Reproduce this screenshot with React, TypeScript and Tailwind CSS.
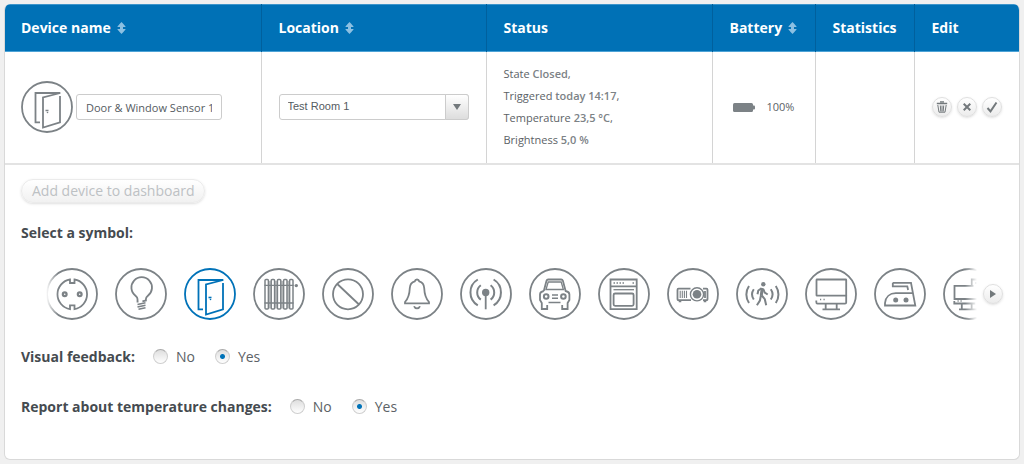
import { useState, type ReactNode } from "react";
import { clsx } from "clsx";

/**
 * Table columns. The status column has no width and takes what is left.
 */
const columns = [
  { name: "Device name", width: "w-[256px]", sortable: true },
  { name: "Location", width: "w-[225px]", sortable: true },
  { name: "Status", width: "", sortable: false },
  { name: "Battery", width: "w-[103px]", sortable: true },
  { name: "Statistics", width: "w-[99px]", sortable: false },
  { name: "Edit", width: "w-[105px]", sortable: false },
];

const readings = [
  { label: "State", value: "Closed" },
  { label: "Triggered", value: "today 14:17" },
  { label: "Temperature", value: "23,5 °C" },
  { label: "Brightness", value: "5,0 %" },
];

// Line drawings on a 52x52 canvas, placed inside the symbol ring
const doorDrawing = (
  <>
    <path d="M19 41.3h-4.5V12h24.8L22 16.5v30l17-5.2V15" />
    <path d="M24.5 29.5h3" strokeWidth="1.6" />
    <circle cx="26.500" cy="31.500" r=".8" fill="currentColor" stroke="none" />
  </>
);

const symbols: { id: string; drawing: ReactNode }[] = [
  {
    id: "Socket",
    drawing: (
      <>
        <path d="M24 11.500v3.500h4.500v-3.500a15 15 0 0 1 0 29.600v-3.700H24v3.700a15 15 0 0 1 0-29.600z" />
        <circle cx="18.700" cy="26.300" r="1.900" strokeWidth="2.200" />
        <circle cx="33.700" cy="26.300" r="1.900" strokeWidth="2.200" />
      </>
    ),
  },
  {
    id: "Light bulb",
    drawing: (
      <>
        <path d="M23.500 33.500h-1v-2.500c0-1.500-.8-2.300-2-3.300a10.300 10.300 0 1 1 12.400 0c-1.200 1-2 1.800-2 3.300v1.500l-3.500.8" />
        <path d="M22.500 36.500l8-1.800M22.500 39l8-1.800M23.500 41.300l7-1.600" strokeWidth="1.500" />
      </>
    ),
  },
  { id: "Door", drawing: doorDrawing },
  {
    id: "Radiator",
    drawing: (
      <>
        <path d="M16.800 13v27.500M23 13v27.500M29.200 13v27.500M35.300 13v27.500" strokeWidth="1.800" opacity=".5" />
        {[12, 18.2, 24.4, 30.6, 36.6].map((x) => (
          <rect key={x} x={x} y="11.500" width="3.400" height="29.500" rx="1" strokeWidth="1.500" />
        ))}
        <path d="M11.500 17.300h29M11.500 35h29" strokeWidth="1.300" />
        <circle cx="43.300" cy="17.600" r="1.700" fill="currentColor" stroke="none" />
      </>
    ),
  },
  {
    id: "None",
    drawing: (
      <>
        <circle cx="26" cy="26.300" r="15" />
        <path d="M15.300 16L37 36.500" />
      </>
    ),
  },
  {
    id: "Bell",
    drawing: (
      <>
        <path d="M26 11.500c1.300 0 2 .9 2.200 1.800 3 .8 4.800 3.200 5 6.700.3 7.500 1.500 10.500 4.800 14v1.300H14V34c3.300-3.500 4.500-6.500 4.800-14 .2-3.500 2-5.900 5-6.700.2-.9.900-1.800 2.200-1.800z" />
        <path d="M23 38.200a3.200 3.200 0 0 0 6 0" />
      </>
    ),
  },
  {
    id: "Antenna",
    drawing: (
      <>
        <circle cx="25.700" cy="24.500" r="3.700" fill="currentColor" stroke="none" />
        <path d="M25.700 25v16.300" />
        <path d="M20.800 17.200a9 9 0 0 0 0 14.400M30.600 17.200a9 9 0 0 1 0 14.400M17.800 11.500a15 15 0 0 0 0 25.800M33.600 11.500a15 15 0 0 1 0 25.800" strokeWidth="2" />
      </>
    ),
  },
  {
    id: "Car",
    drawing: (
      <>
        <path d="M14.800 23l2.700-10.200q.4-1.300 1.700-1.300h13q1.300 0 1.700 1.300L36.600 23q3.800.8 3.800 3.500v5.500l-1.800 3v6h-5.400v-4M18.200 37v4h-5.400v-6L11 32v-5.500Q11 23.800 14.800 23" />
        <path d="M17 21.500l2.200-7.500h13l2.200 7.500z" strokeWidth="1.300" />
        <circle cx="17.200" cy="28.500" r="2.300" strokeWidth="2" />
        <circle cx="34.400" cy="28.500" r="2.300" strokeWidth="2" />
        <path d="M23 27h6M23 30.300h6M19.500 34.500h12" strokeWidth="1.500" />
      </>
    ),
  },
  {
    id: "Oven",
    drawing: (
      <>
        <path d="M12.500 11.500h26.200v29.700H12.500zM12.500 18.300h26.200" />
        <path d="M15.500 21.700h20.500" strokeWidth="1.300" />
        <rect x="15.600" y="25.500" width="20" height="12.300" rx="1.500" />
        <path d="M15.500 15h1.500M18.500 15h1.500M21.500 15h1.500M24.500 15h1.500M34.500 15h1.500" strokeWidth="1.300" />
      </>
    ),
  },
  {
    id: "Projector",
    drawing: (
      <>
        <path d="M23.500 20.700H11.500q-1 0-1 1v9.500q0 1 1 1h12.500M36 20.700h3.500q1 0 1 1v9.500q0 1-1 1H36M38 23v7" />
        <circle cx="30" cy="26.300" r="6.600" strokeWidth="1.400" />
        <circle cx="30" cy="26.300" r="4.300" fill="currentColor" stroke="none" />
        <path d="M13.200 22.700v7.300M15.300 22.700v7.300M17.400 22.700v7.300M19.500 22.700v7.300" strokeWidth="1.100" />
        <path d="M11.700 33.600h2.600M36.700 33.600h2.600" strokeWidth="1.400" />
      </>
    ),
  },
  {
    id: "Motion",
    drawing: (
      <>
        <circle cx="27.300" cy="16.200" r="2.200" fill="currentColor" stroke="none" />
        <path d="M26.300 20l-1 7.200" strokeWidth="3" />
        <path d="M25.500 20.200l-3.200 2.300-.8 3.800M27.300 21l1.400 3.600 3 1.900M25 27l-1.100 5.500-3 4.800M25.800 27.500l3 3.700 1.400 6" strokeWidth="2" />
        <path d="M17.800 21.200a9 9 0 0 0 0 10.300M34.800 21.200a9 9 0 0 1 0 10.300M13 18a15 15 0 0 0 0 17M39.800 18a15 15 0 0 1 0 17" strokeWidth="2" />
      </>
    ),
  },
  {
    id: "Computer",
    drawing: (
      <>
        <rect x="11.500" y="11.500" width="29.700" height="16.200" rx=".5" />
        <path d="M41.200 27v7.500q0 1.200-1.200 1.200H12.500q-1.200 0-1.200-1.700v-1.500M20.700 36v5M31.700 36v5M17.500 41.300h17.500" />
        <path d="M15 31.500h1.200M18.500 31.500h1.200" strokeWidth="1.300" />
      </>
    ),
  },
  {
    id: "Iron",
    drawing: (
      <>
        <path d="M18.800 14.800h18.200l4.300 22.700H11v-2.500c.6-6 4.800-9.800 10.800-9.800h16.700M18.800 14.800v3.500h14.500l.8 3.700" />
        <circle cx="21.700" cy="32" r="2.500" fill="currentColor" stroke="none" />
        <circle cx="32" cy="32" r="2.500" fill="currentColor" stroke="none" />
      </>
    ),
  },
  {
    id: "Workstation",
    drawing: (
      <>
        <path d="M28.800 17.300v-5.800h8v25M32 15h3M30.500 17.800H11.500v13.200h25M11.300 33v2.500h21M18.800 36v5M28.700 36v5M16 41.300h20" />
        <path d="M14.500 33h1.200M17.500 33h1.200" strokeWidth="1.300" />
      </>
    ),
  },
];

function Symbol({ children }: { children: ReactNode }) {
  return (
    <svg viewBox="0 0 52 52" className="block size-[52px] shrink-0" fill="none" stroke="currentColor" strokeWidth="1.800" aria-hidden="true">
      <circle cx="26" cy="26" r="25" />
      {children}
    </svg>
  );
}

function SortIcon() {
  return (
    <svg viewBox="0 0 9 12" className="h-3 w-[9px] fill-[#8cc0e2]" aria-hidden="true">
      <path d="M4.500 0Q6.500 2 8.500 4.500V5H6v2h2.500v.5Q6.500 10 4.500 12 2.500 10 .5 7.500V7H3V5H.5v-.5Q2.500 2 4.500 0z" />
    </svg>
  );
}

// Small round grey button used for the row actions and the symbol pager
function RoundButton({ label, children }: { label: string; children: ReactNode }) {
  return (
    <button
      type="button"
      aria-label={label}
      className="flex size-5 shrink-0 items-center justify-center rounded-full border border-[#e0e0e0] bg-linear-to-b from-white to-[#ececec] text-[#73797c] shadow-sm"
    >
      {children}
    </button>
  );
}

function YesNo({ name, label }: { name: string; label: string }) {
  const [value, setValue] = useState("Yes");

  return (
    <div role="radiogroup" aria-label={label} className="flex h-6 items-center">
      <span className="mr-[18px] font-bold text-[#454b50]">{label}</span>
      {["No", "Yes"].map((option) => (
        <label key={option} className="mr-5 flex items-center gap-2">
          <input
            type="radio"
            name={name}
            checked={value === option}
            onChange={() => setValue(option)}
            className="size-[15px] appearance-none rounded-full border border-[#cfcfcf] border-t-[#a9a9a9] bg-linear-to-b from-[#dedede] to-white checked:bg-[radial-gradient(circle,#0072b8_2px,transparent_3px),linear-gradient(#dedede,#fff)]"
          />
          {option}
        </label>
      ))}
    </div>
  );
}

export default function App() {
  const [symbol, setSymbol] = useState("Door");

  return (
    <div className="min-h-screen bg-[#f0f0f0] p-1 font-['Open_Sans',sans-serif] text-sm text-[#5c6266]">
      <main className="overflow-hidden rounded-md border border-[#d9d9d9] border-t-0 bg-white">
        <table className="w-full table-fixed border-collapse text-left">
          <thead>
            <tr className="h-[47px] border-t border-b border-t-[#3d95cb] border-b-[#4da3d6] bg-[#0071b6] text-white">
              {columns.map((column) => (
                <th
                  key={column.name}
                  scope="col"
                  className={clsx("border-r border-r-[#00609d] px-[17px] font-bold first:pl-4 last:border-r-0", column.width)}
                >
                  {column.sortable ? (
                    <button type="button" className="flex items-center gap-1.5">
                      {column.name}
                      <SortIcon />
                    </button>
                  ) : (
                    column.name
                  )}
                </th>
              ))}
            </tr>
          </thead>
          <tbody>
            <tr className="h-28 border-b-2 border-b-[#e3e3e3] text-[11px] *:border-r *:border-r-[#d4d4d4] *:px-[17px] *:first:pl-4 *:last:border-r-0">
              <td>
                <div className="flex items-center gap-[3px] text-[#7c8286]">
                  <Symbol>{doorDrawing}</Symbol>
                  <input
                    type="text"
                    aria-label="Device name"
                    defaultValue="Door & Window Sensor 1"
                    className="h-[26px] w-[146px] rounded-[3px] border border-[#cccccc] px-[9px] text-[#555b5f]"
                  />
                </div>
              </td>
              <td>
                <div className="relative">
                  <select
                    aria-label="Location"
                    className="block h-[26px] w-full appearance-none rounded-[3px] border border-[#cccccc] bg-white px-2 font-['Liberation_Sans',sans-serif] text-[#555b5f]"
                  >
                    <option>Test Room 1</option>
                  </select>
                  <span className="pointer-events-none absolute inset-y-0 right-0 flex w-6 items-center justify-center rounded-r-[3px] border border-[#cccccc] bg-linear-to-b from-white to-[#dddddd]">
                    <svg viewBox="0 0 8 6" className="h-1.5 w-2 fill-[#73797c]" aria-hidden="true">
                      <path d="M0 0h8L4 6z" />
                    </svg>
                  </span>
                </div>
              </td>
              <td>
                <ul className="leading-[22px]">
                  {readings.map((reading, i) => (
                    <li key={reading.label}>
                      {reading.label} <span className="font-semibold text-[#7c8286]">{reading.value}</span>
                      {i < readings.length - 1 && ","}
                    </li>
                  ))}
                </ul>
              </td>
              <td>
                <div className="flex items-center gap-3 pl-[3px]">
                  <svg viewBox="0 0 22 9" className="h-[9px] w-[22px] fill-[#7c8286]" aria-hidden="true">
                    <rect width="20" height="9" rx="1.500" />
                    <rect x="18" y="2.500" width="4" height="4" rx="1" />
                  </svg>
                  100%
                </div>
              </td>
              <td />
              <td>
                <div className="flex gap-[5px]">
                  <RoundButton label="Delete">
                    <svg viewBox="0 0 12 12" className="size-3" fill="none" stroke="currentColor" aria-hidden="true">
                      <path d="M4 .8h4M.8 2.500h10.400" strokeWidth="1.300" />
                      <path d="M1.800 4l1.200 7.200h6L10.200 4M4.300 4.500l.5 6M6 4.500v6M7.700 4.500l-.5 6" />
                    </svg>
                  </RoundButton>
                  <RoundButton label="Cancel">
                    <svg viewBox="0 0 8 8" className="size-2" fill="none" stroke="currentColor" strokeWidth="2" aria-hidden="true">
                      <path d="M.7.7l6.600 6.600M7.300.7L.7 7.300" />
                    </svg>
                  </RoundButton>
                  <RoundButton label="Save">
                    <svg viewBox="0 0 12 12" className="size-3" fill="none" stroke="currentColor" strokeWidth="2" aria-hidden="true">
                      <path d="M1.500 7l3 3.300L10.500 1.500" />
                    </svg>
                  </RoundButton>
                </div>
              </td>
            </tr>
          </tbody>
        </table>

        <section className="flex flex-col items-start px-4 pt-3.5 pb-10">
          <button
            type="button"
            disabled
            className="h-6 rounded-full border border-[#ebebeb] bg-linear-to-b from-white to-[#f1f1f1] px-2.5 leading-none text-[#bdc1c4] shadow-sm"
          >
            Add device to dashboard
          </button>

          <h2 className="mt-5 font-bold text-[#454b50]">Select a symbol:</h2>

          <div className="mt-[25px] flex w-full items-center gap-1.5 pl-[25px]">
            <div className="flex min-w-0 flex-1 gap-[17px] overflow-hidden mask-[linear-gradient(to_right,transparent,black_12px,black_calc(100%-12px),transparent)]">
              {symbols.map((item) => (
                <button
                  key={item.id}
                  type="button"
                  aria-label={item.id}
                  aria-pressed={symbol === item.id}
                  onClick={() => setSymbol(item.id)}
                  className={clsx("shrink-0", symbol === item.id ? "text-[#0072b8]" : "text-[#7c8286]")}
                >
                  <Symbol>{item.drawing}</Symbol>
                </button>
              ))}
            </div>
            <RoundButton label="More symbols">
              <svg viewBox="0 0 6 8" className="h-2 w-1.5 fill-current" aria-hidden="true">
                <path d="M0 0l6 4-6 4z" />
              </svg>
            </RoundButton>
          </div>

          <div className="mt-[25px] flex flex-col gap-[26px]">
            <YesNo name="visual-feedback" label="Visual feedback:" />
            <YesNo name="temperature-report" label="Report about temperature changes:" />
          </div>
        </section>
      </main>
    </div>
  );
}
